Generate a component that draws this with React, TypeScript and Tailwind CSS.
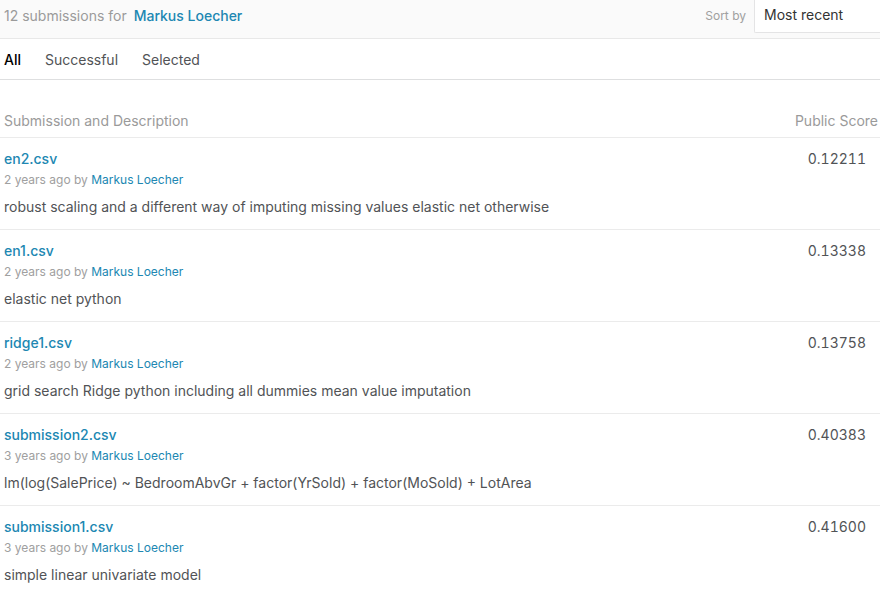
import React from "react";

type Submission = { file: string; age: string; description: string; score: string };

const submissions: Submission[] = [
  { file: "en2.csv", age: "2 years ago", description: "robust scaling and a different way of imputing missing values elastic net otherwise", score: "0.12211" },
  { file: "en1.csv", age: "2 years ago", description: "elastic net python", score: "0.13338" },
  { file: "ridge1.csv", age: "2 years ago", description: "grid search Ridge python including all dummies mean value imputation", score: "0.13758" },
  { file: "submission2.csv", age: "3 years ago", description: "lm(log(SalePrice) ~ BedroomAbvGr + factor(YrSold) + factor(MoSold) + LotArea", score: "0.40383" },
  { file: "submission1.csv", age: "3 years ago", description: "simple linear univariate model", score: "0.41600" },
];

export default function App() {
  return (
    <main className="overflow-hidden bg-white font-['Inter',sans-serif] text-sm text-[#515356]">
      <header className="flex h-[39px] items-start justify-between border-b border-[#e8e8e8] bg-[#fafafa] pl-1">
        <h1 className="flex gap-[7px] pt-[6px] leading-5 text-[#9a9a9a]">
          <span>12 submissions for</span>
          <a href="#" className="font-medium text-[#2087b2]">Markus Loecher</a>
        </h1>
        <div className="flex items-start">
          <label htmlFor="sort" className="pt-[6px] pr-2 text-xs leading-5 text-[#a0a0a0]">Sort by</label>
          <select id="sort" className="h-[33px] w-[126px] appearance-none rounded-bl-xs border-b border-l border-[#e4e4e5] bg-white pb-[2px] pl-[9px] text-sm text-[#333]">
            <option>Most recent</option>
          </select>
        </div>
      </header>

      <nav className="flex h-[41px] items-center gap-6 border-b border-[#dedfe0] pt-[2px] pl-1">
        <button className="font-medium text-black">All</button>
        <button>Successful</button>
        <button>Selected</button>
      </nav>

      <table className="mt-[31px] w-full border-collapse text-left">
        <thead>
          <tr className="border-b border-[#ebebeb] text-[#9a9a9a]">
            <th className="pb-[6px] pl-1 font-normal leading-5">Submission and Description</th>
            <th className="w-[100px] pr-[2px] pb-[6px] text-right font-normal leading-5">Public Score</th>
          </tr>
        </thead>
        <tbody>
          {submissions.map((s) => (
            <tr key={s.file} className="border-b border-[#ebebeb] align-top">
              <td className="pt-[11px] pb-3 pl-1">
                <a href="#" className="block w-fit font-medium leading-5 text-[#2087b2]">{s.file}</a>
                <p className="pt-px text-xs leading-5 text-[#a0a0a0]">
                  {s.age} by <a href="#" className="text-[#2087b2]">Markus Loecher</a>
                </p>
                <p className="pt-[7px] leading-5">{s.description}</p>
              </td>
              <td className="pt-[11px] pr-[14px] text-right leading-5 tabular-nums">{s.score}</td>
            </tr>
          ))}
        </tbody>
      </table>
    </main>
  );
}
